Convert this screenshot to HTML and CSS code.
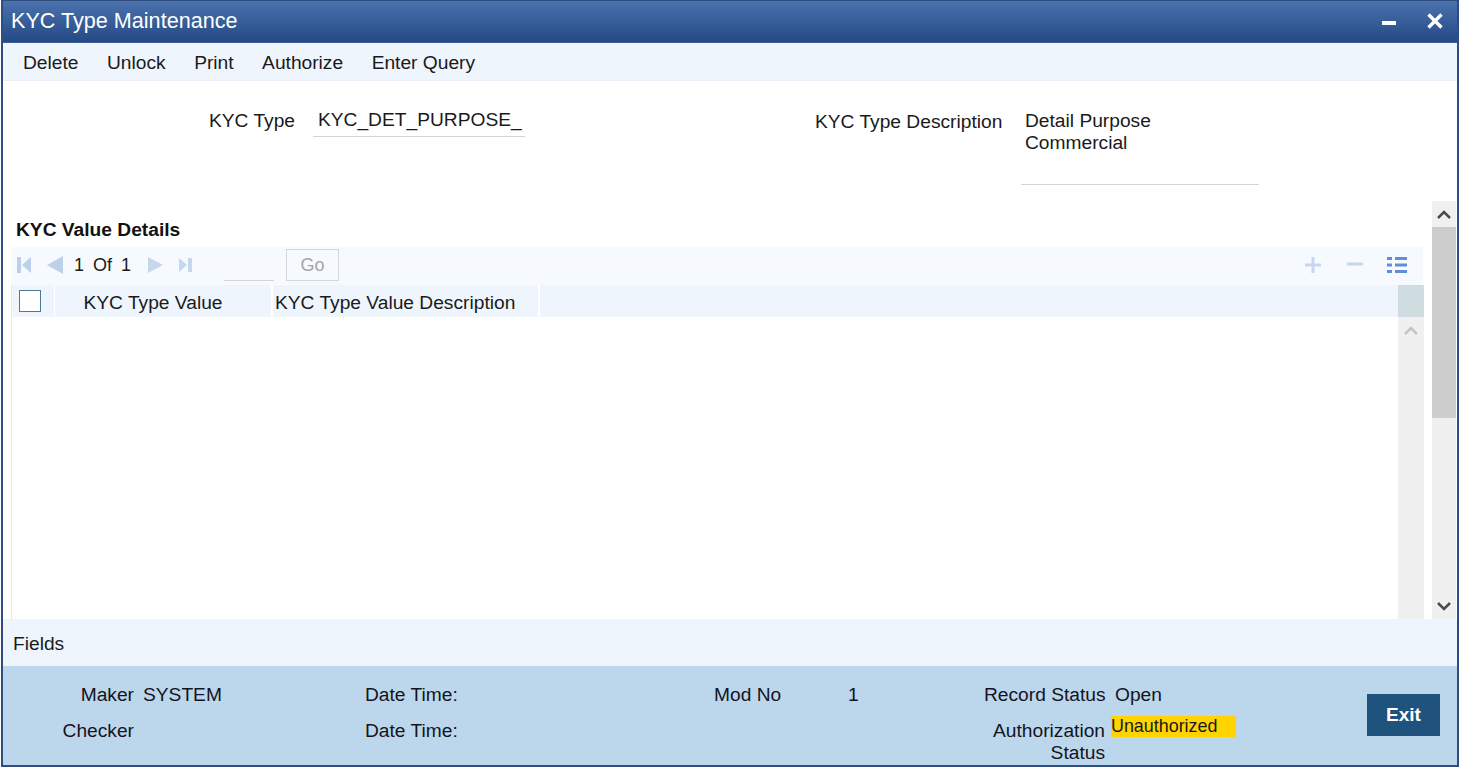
FILE: index.html
```html
<!DOCTYPE html>
<html lang="en">
<head>
<meta charset="utf-8">
<title>KYC Type Maintenance</title>
<link rel="stylesheet" href="styles.css">
</head>
<body>
<div class="window">
  <header class="titlebar">
    <h1 class="title">KYC Type Maintenance</h1>
    <div class="win-controls">
      <svg class="win-icon" width="16" height="16" viewBox="0 0 16 16"><rect x="1" y="8" width="14" height="4" fill="#fff"/></svg>
      <svg class="win-icon" width="20" height="20" viewBox="0 0 20 20"><path d="M3.500 3.500L16.500 16.500M16.500 3.500L3.500 16.500" stroke="#fff" stroke-width="3.400" fill="none"/></svg>
    </div>
  </header>
  <nav class="menu">
    <span class="menu-item">Delete</span>
    <span class="menu-item">Unlock</span>
    <span class="menu-item">Print</span>
    <span class="menu-item">Authorize</span>
    <span class="menu-item">Enter Query</span>
  </nav>
  <section class="form">
    <label class="form-label type-label">KYC Type</label>
    <div class="input type-input">KYC_DET_PURPOSE_</div>
    <label class="form-label desc-label">KYC Type Description</label>
    <div class="input desc-input">Detail Purpose<br>Commercial</div>
  </section>
  <div class="content">
    <main class="details">
      <h2 class="details-title">KYC Value Details</h2>
      <div class="pager">
        <svg class="pg" width="16" height="18" viewBox="0 0 16 18"><path d="M1 1h4v16H1zM15 1v16L6 9z" fill="#bcd0ea"/></svg>
        <svg class="pg pg-prev" width="18" height="18" viewBox="0 0 18 18"><path d="M17 0v18L1 9z" fill="#bcd0ea"/></svg>
        <span class="pg-text">1</span><span class="pg-text of">Of</span><span class="pg-text last">1</span>
        <svg class="pg pg-next" width="15" height="16" viewBox="0 0 15 16"><path d="M0 0v16l15-8z" fill="#c6d7ee"/></svg>
        <svg class="pg pg-last" width="13" height="14" viewBox="0 0 13 14"><path d="M0 0v14l8-7zM9 0h4v14H9z" fill="#c6d7ee"/></svg>
        <div class="pg-input"></div>
        <button class="go" type="button">Go</button>
        <div class="tools">
          <svg class="tool-plus" width="16" height="16" viewBox="0 0 16 16"><path d="M8 0v16M0 8h16" stroke="#c6d8f0" stroke-width="3" fill="none"/></svg>
          <svg width="16" height="16" viewBox="0 0 16 16"><path d="M0 7h16" stroke="#c6d8f0" stroke-width="3" fill="none"/></svg>
          <svg width="20" height="16" viewBox="0 0 20 16"><path d="M0 0h5v3H0zM8 0h12v3H8zM0 6.500h5v3H0zM8 6.500h12v3H8zM0 13h5v3H0zM8 13h12v3H8z" fill="#5f8fd6"/></svg>
        </div>
      </div>
      <div class="table">
        <div class="thead">
          <div class="th th-check"><span class="checkbox"></span></div>
          <div class="th th-value">KYC Type Value</div>
          <div class="th th-desc">KYC Type Value Description</div>
          <div class="th th-rest"></div>
          <div class="th-scroll"></div>
        </div>
        <div class="tbody">
          <div class="rows"></div>
          <div class="inner-scroll">
            <svg width="14" height="9" viewBox="0 0 14 9"><path d="M1 8l6-6 6 6" stroke="#c4c4c4" stroke-width="2.500" fill="none"/></svg>
          </div>
        </div>
      </div>
    </main>
    <div class="outer-scroll">
      <div class="sb-btn"><svg width="14" height="9" viewBox="0 0 14 9"><path d="M1 8l6-6 6 6" stroke="#4a4a4a" stroke-width="2.500" fill="none"/></svg></div>
      <div class="sb-thumb"></div>
      <div class="sb-track"></div>
      <div class="sb-btn"><svg width="14" height="9" viewBox="0 0 14 9"><path d="M1 1l6 6 6-6" stroke="#4a4a4a" stroke-width="2.500" fill="none"/></svg></div>
    </div>
  </div>
  <div class="fields">Fields</div>
  <footer class="audit">
    <div class="audit-grid">
      <span class="a-label">Maker</span><span class="a-value">SYSTEM</span>
      <span class="a-plain">Date Time:</span>
      <span class="a-plain">Mod No</span><span class="a-plain">1</span>
      <span class="a-label">Record Status</span><span class="a-value open">Open</span>
      <span class="a-label">Checker</span><span class="a-value"></span>
      <span class="a-plain">Date Time:</span>
      <span class="a-plain"></span><span class="a-plain"></span>
      <span class="a-label auth">Authorization<br>Status</span><span class="a-value"><span class="status-badge">Unauthorized</span></span>
    </div>
    <button class="exit" type="button">Exit</button>
  </footer>
</div>
</body>
</html>
```

FILE: styles.css
```css
* { box-sizing: border-box; }
html, body { margin: 0; padding: 0; background: #fff; }
body {
  width: 1459px;
  height: 770px;
  overflow: hidden;
  font-family: "Liberation Sans", Arial, sans-serif;
  font-size: 19.200px;
  color: #1a1a1a;
}
.window {
  width: 1458px;
  height: 767px;
  margin-left: 1px;
  border: 2px solid #2f4d80;
  border-top-width: 1px;
  display: flex;
  flex-direction: column;
  background: #fff;
}
.titlebar {
  height: 42px;
  flex: none;
  display: flex;
  align-items: center;
  justify-content: space-between;
  padding: 0 12px 1px 8px;
  background: linear-gradient(#4a72ad, #244a85);
  border-bottom: 1px solid #3c5f95;
}
.title { margin: 0; font-size: 21.600px; font-weight: 400; color: #fff; }
.win-controls { display: flex; align-items: center; gap: 28px; }
.win-icon { display: block; }
.menu {
  height: 38px;
  flex: none;
  display: flex;
  align-items: center;
  gap: 28.500px;
  padding: 3px 0 0 20px;
  background: #eef5fd;
  border-bottom: 1px solid #e8eef5;
}
.form { height: 120px; flex: none; display: flex; align-items: flex-start; }
.form-label { line-height: 20px; }
.type-label { margin: 30px 0 0 206px; width: 104px; }
.input { line-height: 22px; padding: 0 4px; border-bottom: 1px solid #d4d4d4; }
.type-input { margin-top: 28px; width: 212px; height: 28px; padding-left: 5px; overflow: hidden; white-space: nowrap; }
.desc-label { margin: 31px 0 0 290px; width: 206px; }
.desc-input { margin-top: 29px; width: 238px; height: 75px; }
.content { height: 418px; flex: none; display: flex; }
.details { width: 1421px; flex: none; padding: 16px 0 0 8px; display: flex; flex-direction: column; min-height: 0; }
.details-title { margin: 0 0 0 5px; font-size: 19.200px; line-height: 26px; font-weight: 700; color: #111; height: 30px; flex: none; }
.pager {
  height: 38px;
  flex: none;
  width: 1412px;
  display: flex;
  align-items: center;
  padding: 0 0 2px 5px;
  background: #f6f9fe;
}
.pg { display: block; }
.pg-prev { margin-left: 14px; }
.pg-text { margin-left: 10px; font-size: 18px; }
.of { margin-left: 9px; }
.last { margin-left: 9px; }
.pg-next { margin-left: 17px; }
.pg-last { margin-left: 16px; }
.pg-input { width: 50px; height: 34px; margin-left: 32px; border-bottom: 1px solid #d4d4d4; align-self: flex-start; }
.go {
  width: 53px;
  height: 32px;
  margin: 0 0 0 12px;
  padding: 0;
  background: #f6f9fe;
  border: 1px solid #d3d6da;
  color: #a2a6aa;
  font: 18px "Liberation Sans", Arial, sans-serif;
}
.tools { margin-left: auto; margin-right: 16px; display: flex; align-items: center; gap: 24px; }
.tools svg { display: block; }
.tool-plus { margin-right: 2px; }
.table { flex: 1; min-height: 0; display: flex; flex-direction: column; width: 1413px; border-left: 1px solid #e4e8ee; }
.thead { height: 32px; flex: none; display: flex; }
.th { background: #eef5fd; line-height: 36px; white-space: nowrap; }
.th-check { width: 42px; display: flex; align-items: center; padding-left: 7px; margin-right: 1px; }
.checkbox { width: 22px; height: 22px; background: #fff; border: 1px solid #4f7a94; display: block; }
.th-value { width: 216px; padding-left: 28.500px; margin-right: 2px; }
.th-desc { width: 265px; padding-left: 2px; margin-right: 2px; }
.th-rest { flex: 1; }
.th-scroll { width: 26px; background: #cfdde0; }
.tbody { flex: 1; display: flex; min-height: 0; }
.rows { flex: 1; }
.inner-scroll { width: 26px; background: #f0f0f0; display: flex; justify-content: center; padding-top: 9px; align-items: flex-start; }
.inner-scroll svg { display: block; }
.outer-scroll { width: 24px; flex: none; margin-left: 8px; display: flex; flex-direction: column; }
.sb-btn { height: 26px; flex: none; background: #f0f0f0; display: flex; align-items: center; justify-content: center; }
.sb-btn svg { display: block; }
.sb-thumb { height: 191px; flex: none; background: #cdcdcd; }
.sb-track { flex: 1; background: #f0f0f0; }
.fields {
  height: 47px;
  flex: none;
  padding-left: 10px;
  line-height: 49px;
  background: #eef5fd;
}
.audit {
  flex: 1;
  min-height: 0;
  display: flex;
  justify-content: space-between;
  background: #bcd7ec;
}
.audit-grid {
  display: grid;
  grid-template-columns: 131px 231px 349px 134px 136px 121px 130px;
  grid-template-rows: 36px 54px;
  padding-top: 11px;
  line-height: 36px;
  color: #14141e;
}
.a-label { text-align: right; white-space: nowrap; }
.a-value { padding-left: 9px; white-space: nowrap; }
.open { padding-left: 10px; }
.a-plain { white-space: nowrap; }
.auth { line-height: 22px; padding-top: 7px; }
.status-badge { display: block; width: 125px; height: 21px; margin: 3px 0 0 -3px; line-height: 20px; font-size: 17.900px; background: #ffd400; color: #1a1a1a; }
.exit {
  width: 73px;
  height: 42px;
  margin: 28px 17px 0 0;
  padding: 0;
  border: 0;
  background: #1f527c;
  color: #fff;
  font: 700 19px "Liberation Sans", Arial, sans-serif;
}
```
